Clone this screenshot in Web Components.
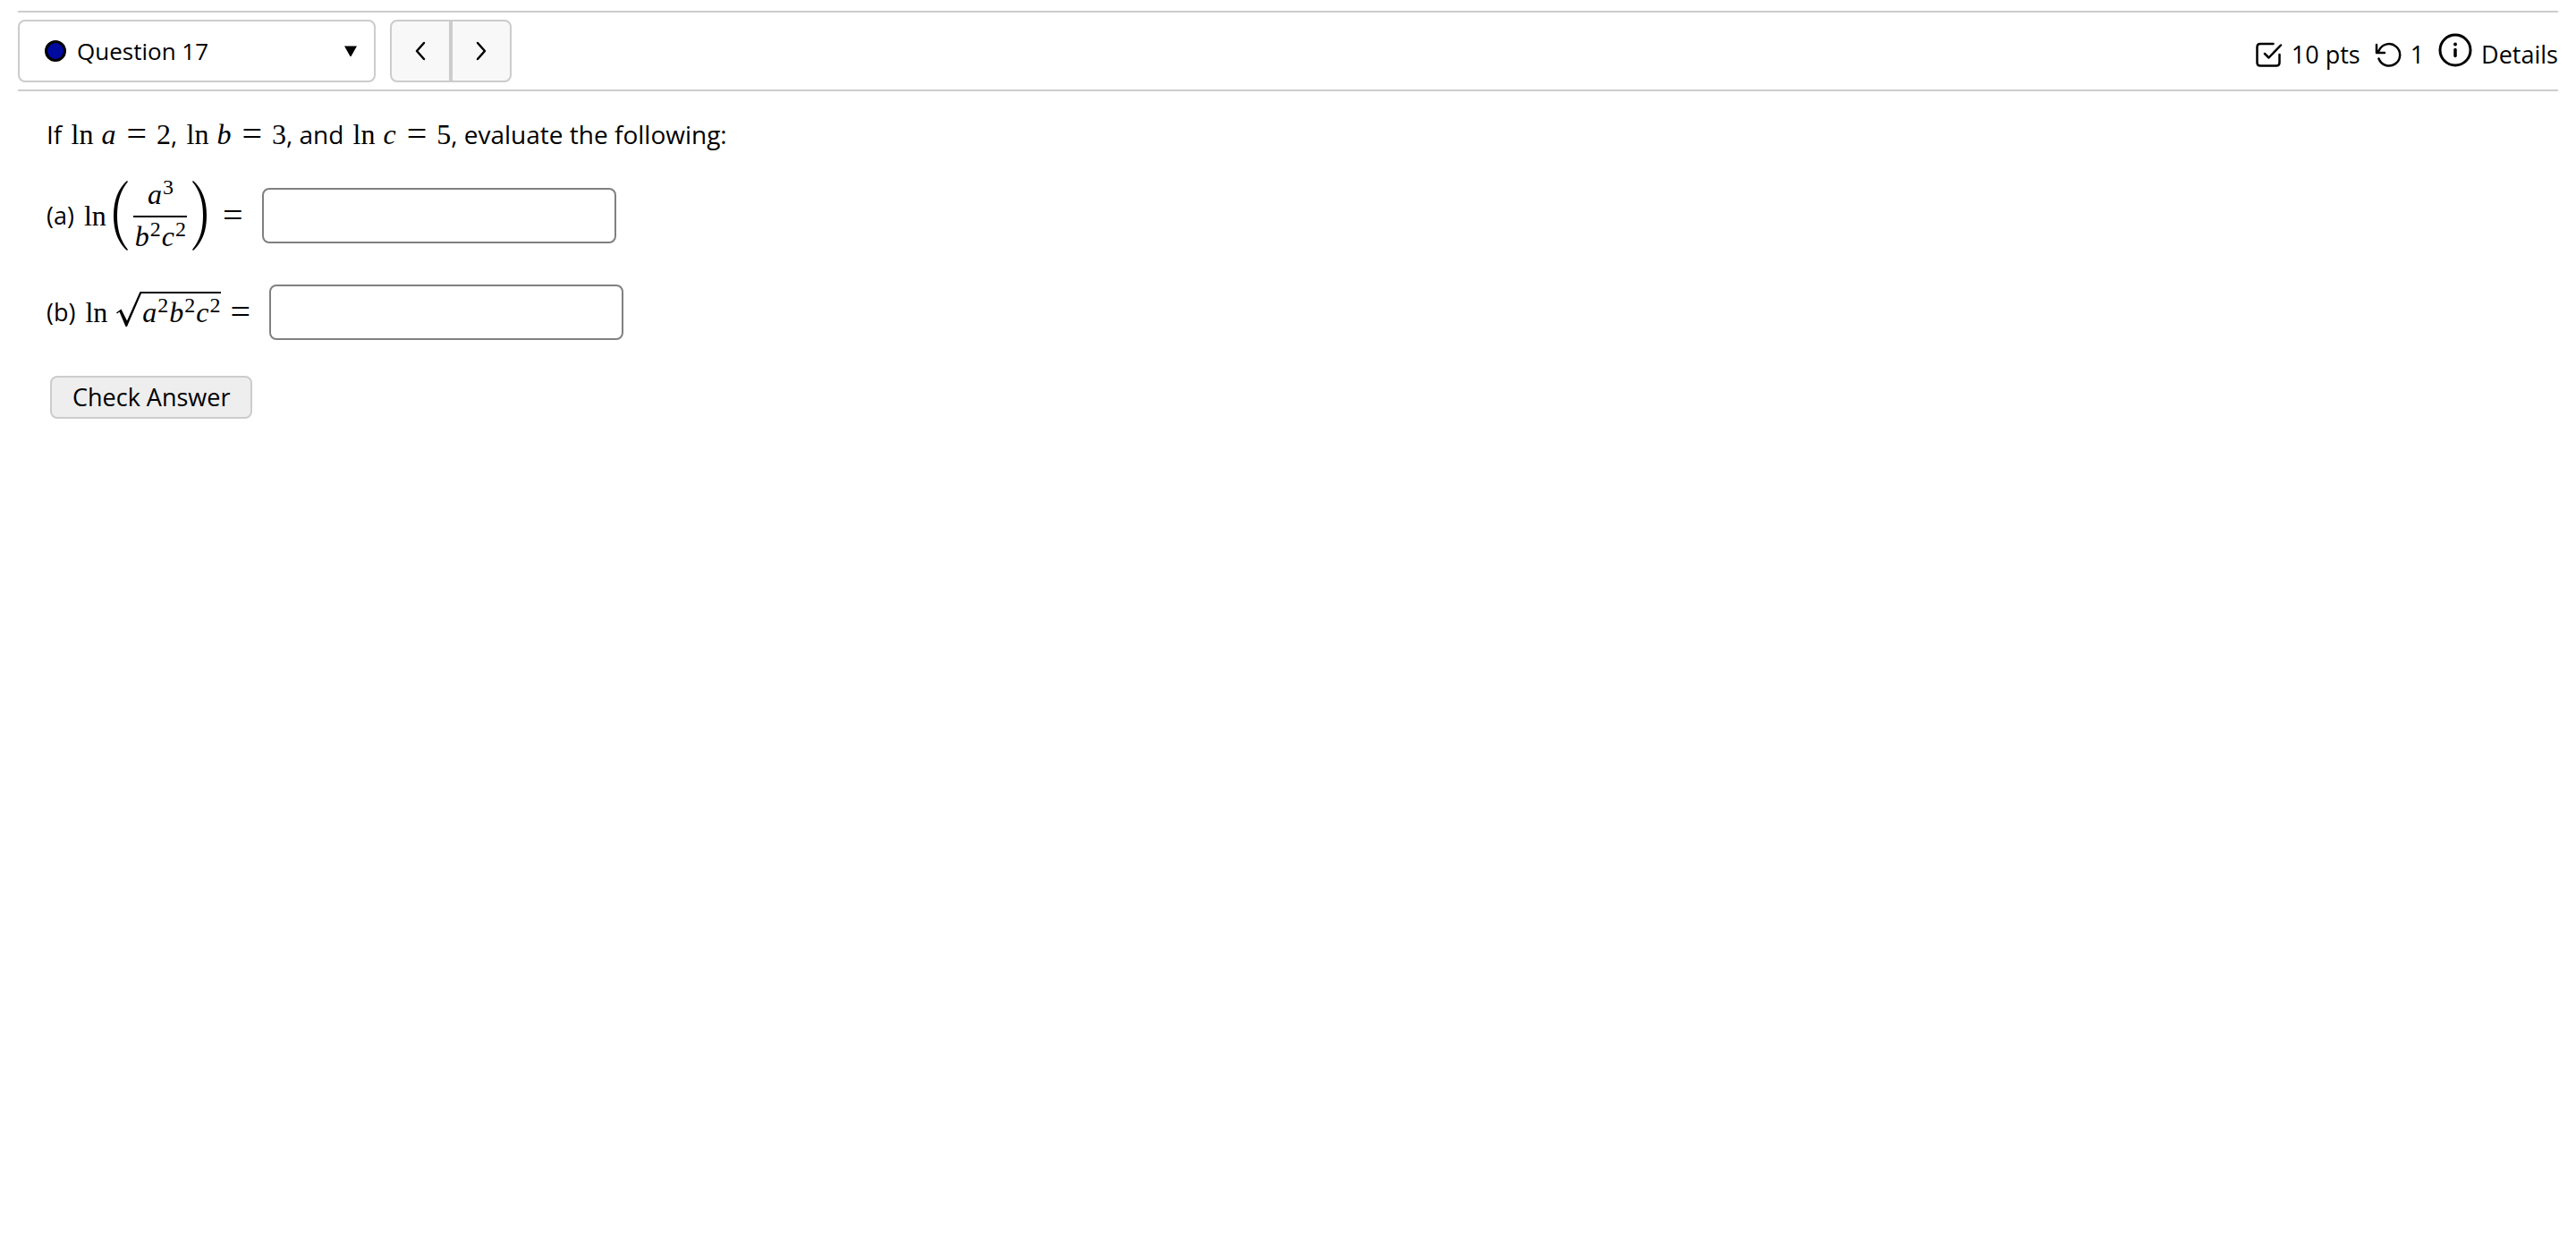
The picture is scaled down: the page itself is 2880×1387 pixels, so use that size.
<!DOCTYPE html>
<html lang="en">
<head>
<meta charset="utf-8">
<title>Question 17</title>
<style>
body{margin:0;background:#fff;color:#000;font:27px/40px "Open Sans",sans-serif}
</style>
</head>
<body>
<question-page></question-page>
<script>
const define = (name, html) => customElements.define(name, class extends HTMLElement {
  constructor() {
    super();
    this.attachShadow({ mode: 'open' }).innerHTML = html;
  }
});

// Inline mathematics: identifiers, operators, superscripts
define('math-row', `<style>
:host{display:inline-flex;align-items:center;font:32px/40px "Liberation Serif",serif;margin-left:3px}
</style><slot></slot>`);
define('math-fn', `<style>:host{display:block;margin-right:8px}</style><slot></slot>`);
define('math-var', `<style>:host{display:block;font-style:italic;padding:0 1px}</style><slot></slot>`);
define('math-eq', `<style>:host{display:block;font-size:40px;line-height:40px;margin:0 11px}</style>=`);
define('math-sup', `<style>:host{display:block;font-size:24px;line-height:24px;align-self:flex-start}</style><slot></slot>`);
define('math-paren', `<style>
:host{display:inline-flex;align-items:center;margin-right:7px}
svg{display:block;width:16px;height:78px}
.body{padding:0 6px}
</style>
<svg viewBox="0 0 16 78" aria-hidden="true"><path d="M15 0C5 9 0 22 0 39s5 30 15 39l1-1C8 67 4 56 4 39S8 11 16 1z"/></svg>
<div class="body"><slot></slot></div>
<svg viewBox="0 0 16 78" aria-hidden="true"><path d="M1 0C11 9 16 22 16 39S11 69 1 78L0 77c8-10 12-21 12-38S8 11 0 1z"/></svg>`);
define('math-frac', `<style>
:host{display:flex;flex-direction:column}
.num,.den{display:flex;justify-content:center;align-items:center}
.num{border-bottom:2px solid #000;padding-bottom:4px}
.den{padding:1px 1px}
</style>
<div class="num"><slot name="num"></slot></div>
<div class="den"><slot name="den"></slot></div>`);
define('math-sqrt', `<style>
:host{display:inline-flex;align-items:flex-start;margin:-3px 0 0 2px}
svg{display:block;width:28px;height:39px}
.body{display:flex;align-items:center;border-top:2px solid #000;padding-top:1px}
</style>
<svg viewBox="0 0 28 39" aria-hidden="true"><path d="M0 23.500l5.500-4L12 32.500 26.500 0H28v2L12 39h-1.500L3.500 22.500 1 24.500z"/></svg>
<div class="body"><slot></slot></div>`);

define('question-picker', `<style>
:host{display:block;font-size:26px}
label{box-sizing:border-box;width:400px;height:70px;border:2px solid #ccc;border-radius:8px;display:flex;align-items:center;padding:0 18px 0 28px;gap:12px}
.dot{box-sizing:border-box;width:24px;height:24px;border:3px solid #000;border-radius:50%;background:#000a9f;flex:none}
select{appearance:none;border:0;padding:0;margin:0;background:none;font:inherit;color:inherit;flex:1;min-width:0;height:40px}
svg{width:16px;height:12px;flex:none}
</style>
<label><span class="dot"></span>
<select aria-label="Question"><option>Question 17</option></select>
<svg viewBox="0 0 16 12" aria-hidden="true"><path d="M1 .5h14L8.500 12h-1z"/></svg></label>`);

define('question-nav', `<style>
:host{display:flex}
button{box-sizing:border-box;width:68px;height:70px;border:2px solid #ccc;background:#f8f8f8;display:flex;align-items:center;justify-content:center;padding:0}
button:first-of-type{border-radius:8px 0 0 8px}
button:last-of-type{border-radius:0 8px 8px 0}
svg{width:12px;height:22px;fill:none;stroke:#000;stroke-width:2.500;stroke-linecap:round;stroke-linejoin:round}
</style>
<button aria-label="Previous question"><svg viewBox="0 0 12 22"><path d="M10 2L2 11l8 9"/></svg></button>
<button aria-label="Next question"><svg viewBox="0 0 12 22"><path d="M2 2l8 9-8 9"/></svg></button>`);

define('question-status', `<style>
:host{display:flex;align-items:center;padding-top:8px}
span,a{display:flex;align-items:center;color:inherit;text-decoration:none}
svg{fill:none;stroke:#000;stroke-width:2.500;stroke-linecap:round;stroke-linejoin:round;display:block}
.pts,.tries{gap:10px;margin-right:16px}
.info{margin-bottom:10px}
.details{gap:10px}
</style>
<span class="pts"><svg width="30" height="28" viewBox="0 0 30 28"><path d="M19.500 2H5Q1.500 2 1.500 5.500v17.500Q1.500 26.500 5 26.500h18q3.500 0 3.500-3.500V14M10 13l4.500 4.500L28 3.500"/></svg>10 pts</span>
<span class="tries"><svg width="30" height="28" viewBox="0 0 30 28"><path d="M2 3v9h9M3 11.500L5 9A12.200 12.200 0 1 1 4.500 18.500"/></svg>1</span>
<a class="details" href="#details"><svg class="info" width="38" height="38" viewBox="0 0 38 38"><circle cx="19" cy="19" r="17" stroke-width="3"/><path stroke-width="3.500" d="M19 18.500v7"/><circle cx="19" cy="12.500" r="2" fill="#000" stroke="none"/></svg>Details</a>`);

define('question-header', `<style>
:host{display:flex;align-items:center;gap:16px;margin:12px 20px 0;border:solid #ccc;border-width:2px 0;padding:8px 0}
question-status{margin-left:auto}
</style>
<question-picker></question-picker><question-nav></question-nav><question-status></question-status>`);

define('answer-box', `<style>
:host{display:block}
label{display:flex;align-items:center}
.prompt{display:flex;align-items:center}
input{box-sizing:border-box;width:396px;height:62px;border:2px solid #808080;border-radius:8px;padding:0 12px;margin:0 0 0 10px;font:inherit;background:#fff}
</style>
<label><span class="prompt"><slot></slot></span><input type="text"></label>`);

define('check-button', `<style>
:host{display:block}
button{box-sizing:border-box;height:48px;border:2px solid #ccc;border-radius:8px;background:#eee;padding:0 23px;font:inherit;color:inherit;display:flex;align-items:center}
</style><button type="button"><slot></slot></button>`);

define('question-page', `<style>
:host{display:block}
main{padding:28px 52px;display:flex;flex-direction:column;align-items:flex-start}
p{margin:0;font-size:28px}
.a{margin-top:27px}
.b{margin-top:33px}
.lbl{margin-right:8px}
check-button{margin:40px 0 0 4px}
</style>
<question-header></question-header>
<main>
<p>If <math-row><math-fn>ln</math-fn><math-var>a</math-var><math-eq></math-eq>2</math-row>, <math-row><math-fn>ln</math-fn><math-var>b</math-var><math-eq></math-eq>3</math-row>, and <math-row><math-fn>ln</math-fn><math-var>c</math-var><math-eq></math-eq>5</math-row>, evaluate the following:</p>
<answer-box class="a"><span class="lbl">(a)</span><math-row><math-fn>ln</math-fn><math-paren><math-frac><math-var slot="num">a</math-var><math-sup slot="num">3</math-sup><math-var slot="den">b</math-var><math-sup slot="den">2</math-sup><math-var slot="den">c</math-var><math-sup slot="den">2</math-sup></math-frac></math-paren><math-eq></math-eq></math-row></answer-box>
<answer-box class="b"><span class="lbl">(b)</span><math-row><math-fn>ln</math-fn><math-sqrt><math-var>a</math-var><math-sup>2</math-sup><math-var>b</math-var><math-sup>2</math-sup><math-var>c</math-var><math-sup>2</math-sup></math-sqrt><math-eq></math-eq></math-row></answer-box>
<check-button>Check Answer</check-button>
</main>`);
</script>
</body>
</html>
